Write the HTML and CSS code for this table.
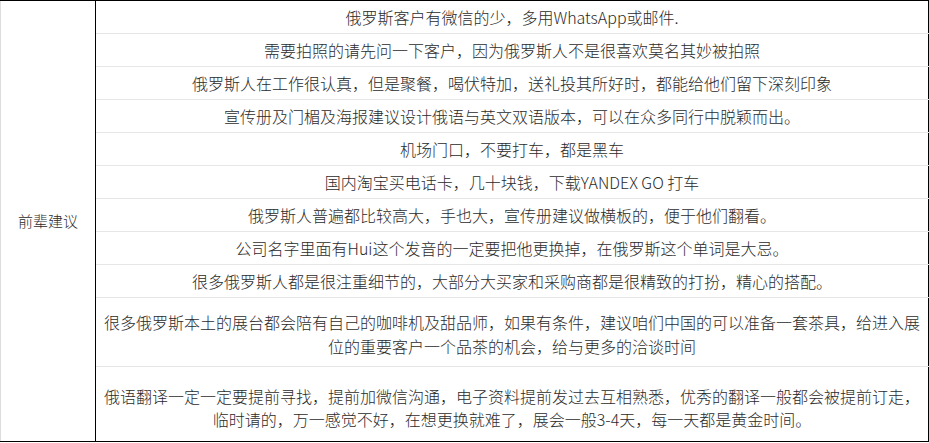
FILE: index.html
```html
<!DOCTYPE html>
<html lang="zh-CN">
<head>
<meta charset="utf-8">
<title>前辈建议</title>
<link rel="stylesheet" href="styles.css">
</head>
<body>
<table class="tips">
  <tbody>
    <tr>
      <td class="label" rowspan="11">前辈建议</td>
      <td class="tip">俄罗斯客户有微信的少，多用WhatsApp或邮件.</td>
    </tr>
    <tr><td class="tip">需要拍照的请先问一下客户，因为俄罗斯人不是很喜欢莫名其妙被拍照</td></tr>
    <tr><td class="tip">俄罗斯人在工作很认真，但是聚餐，喝伏特加，送礼投其所好时，都能给他们留下深刻印象</td></tr>
    <tr><td class="tip">宣传册及门楣及海报建议设计俄语与英文双语版本，可以在众多同行中脱颖而出。</td></tr>
    <tr><td class="tip">机场门口，不要打车，都是黑车</td></tr>
    <tr><td class="tip">国内淘宝买电话卡，几十块钱，下载YANDEX GO 打车</td></tr>
    <tr><td class="tip">俄罗斯人普遍都比较高大，手也大，宣传册建议做横板的，便于他们翻看。</td></tr>
    <tr><td class="tip">公司名字里面有Hui这个发音的一定要把他更换掉，在俄罗斯这个单词是大忌。</td></tr>
    <tr><td class="tip">很多俄罗斯人都是很注重细节的，大部分大买家和采购商都是很精致的打扮，精心的搭配。</td></tr>
    <tr><td class="tip tip-two">很多俄罗斯本土的展台都会陪有自己的咖啡机及甜品师，如果有条件，建议咱们中国的可以准备一套茶具，给进入展位的重要客户一个品茶的机会，给与更多的洽谈时间</td></tr>
    <tr><td class="tip tip-last">俄语翻译一定一定要提前寻找，提前加微信沟通，电子资料提前发过去互相熟悉，优秀的翻译一般都会被提前订走，临时请的，万一感觉不好，在想更换就难了，展会一般3-4天，每一天都是黄金时间。</td></tr>
  </tbody>
</table>
</body>
</html>
```

FILE: styles.css
```css
html, body {
  margin: 0;
  padding: 0;
  background: #ffffff;
}

body {
  font-family: "Noto Sans CJK SC", "Noto Sans", sans-serif;
  font-weight: 300;
  color: #2b2b2b;
  font-size: 16px;
}

.tips {
  width: 929px;
  border-collapse: collapse;
  table-layout: fixed;
  border-top: 1px solid #000000;
  border-right: 1px solid #000000;
  border-bottom: 1px solid #000000;
  border-left: 1px solid #dddddd;
}

.label {
  width: 94px;
  padding: 0;
  text-align: center;
  vertical-align: middle;
  font-size: 15px;
  line-height: 24px;
  border-right: 1px solid #000000;
  border-bottom: 1px solid #000000;
}

.tip {
  padding: 4px 5px;
  line-height: 24px;
  text-align: center;
  vertical-align: top;
  border-bottom: 1px solid #e6e6e6;
}

.tip-two {
  padding-top: 12px;
  padding-bottom: 8px;
}

.tip-last {
  padding-top: 18px;
  padding-bottom: 10px;
  line-height: 23px;
  border-bottom: 1px solid #000000;
}
```
